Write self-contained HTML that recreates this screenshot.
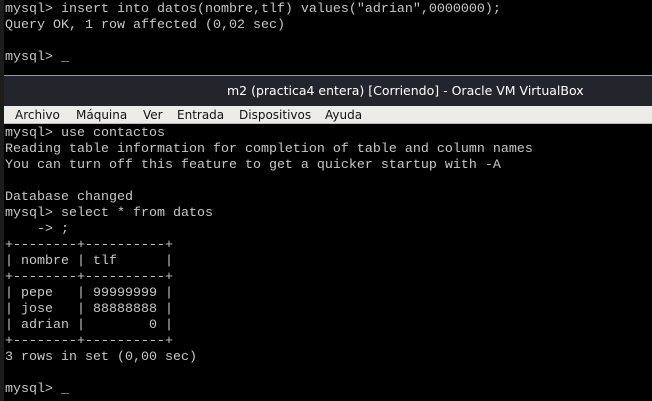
<!DOCTYPE html>
<html><head><meta charset="utf-8"><style>
html,body{margin:0;padding:0;width:652px;height:401px;overflow:hidden;background:#000;}
.strip{position:absolute;left:0;top:0;width:4px;height:401px;background:#1c1c1c;}
pre{position:absolute;left:5px;margin:0;font-family:"Liberation Mono",monospace;font-size:13.33px;line-height:16px;color:#c8c8c8;}
.title{position:absolute;left:4px;top:75px;width:648px;height:30px;background:#23252c;border-top:1px solid #9a9a9a;color:#fff;font-family:"DejaVu Sans","Liberation Sans",sans-serif;font-size:12.5px;line-height:30px;}
.title span{position:absolute;left:223px;}
.menu{position:absolute;left:4px;top:106px;width:648px;height:17px;background:#edebe7;border-bottom:1px solid #bbb;font-family:"DejaVu Sans","Liberation Sans",sans-serif;font-size:12px;line-height:18px;color:#111;}
.menu span{position:absolute;top:0;}
</style></head><body>
<div class="strip"></div>
<pre style="top:2px">mysql&gt; insert into datos(nombre,tlf) values("adrian",0000000);
Query OK, 1 row affected (0,02 sec)

mysql&gt; _</pre>
<div class="title"><span>m2 (practica4 entera) [Corriendo] - Oracle VM VirtualBox</span></div>
<div class="menu"><span style="left:11px">Archivo</span><span style="left:72px">Máquina</span><span style="left:139px">Ver</span><span style="left:173px">Entrada</span><span style="left:235px">Dispositivos</span><span style="left:321px">Ayuda</span></div>
<pre style="top:126px">mysql&gt; use contactos
Reading table information for completion of table and column names
You can turn off this feature to get a quicker startup with -A

Database changed
mysql&gt; select * from datos
    -&gt; ;
+--------+----------+
| nombre | tlf      |
+--------+----------+
| pepe   | 99999999 |
| jose   | 88888888 |
| adrian |        0 |
+--------+----------+
3 rows in set (0,00 sec)

mysql&gt; _</pre>
</body></html>
